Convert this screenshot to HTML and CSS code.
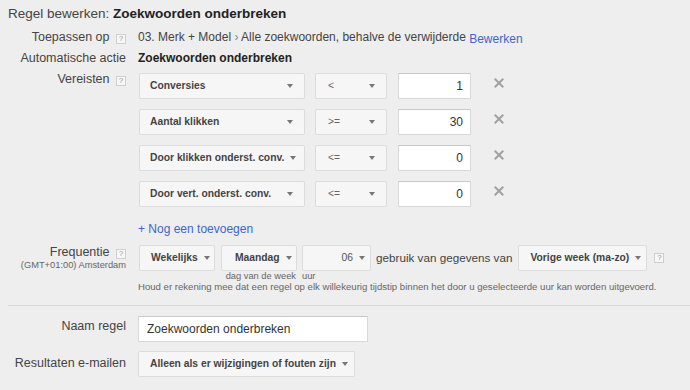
FILE: index.html
```html
<!DOCTYPE html>
<html lang="nl">
<head>
    <meta charset="UTF-8">
    <title>Regel bewerken</title>
    <link rel="stylesheet" href="styles.css">
</head>
<body>
    <div class="page">
        <h1 class="title">Regel bewerken: <b>Zoekwoorden onderbreken</b></h1>

        <div class="row row-apply">
            <div class="label">Toepassen op <span class="help">?</span></div>
            <div class="value">03. Merk + Model <span class="crumb">›</span> Alle zoekwoorden, behalve de verwijderde <a class="link edit" href="#">Bewerken</a></div>
        </div>

        <div class="row row-action">
            <div class="label">Automatische actie</div>
            <div class="value"><b>Zoekwoorden onderbreken</b></div>
        </div>

        <div class="row row-criteria">
            <div class="label label-top">Vereisten <span class="help">?</span></div>
            <div class="value">
                <div class="criteria">
                    <div class="criterion">
                        <div class="select metric">Conversies<span class="arrow"></span></div>
                        <div class="select op">&lt;<span class="arrow"></span></div>
                        <div class="input num">1</div>
                        <span class="remove"></span>
                    </div>
                    <div class="criterion">
                        <div class="select metric">Aantal klikken<span class="arrow"></span></div>
                        <div class="select op">&gt;=<span class="arrow"></span></div>
                        <div class="input num">30</div>
                        <span class="remove"></span>
                    </div>
                    <div class="criterion">
                        <div class="select metric">Door klikken onderst. conv.<span class="arrow"></span></div>
                        <div class="select op">&lt;=<span class="arrow"></span></div>
                        <div class="input num">0</div>
                        <span class="remove"></span>
                    </div>
                    <div class="criterion">
                        <div class="select metric">Door vert. onderst. conv.<span class="arrow"></span></div>
                        <div class="select op">&lt;=<span class="arrow"></span></div>
                        <div class="input num">0</div>
                        <span class="remove"></span>
                    </div>
                </div>
                <a class="link add" href="#">+ Nog een toevoegen</a>
            </div>
        </div>

        <div class="row row-freq">
            <div class="label label-top">
                <div>Frequentie <span class="help">?</span></div>
                <div class="tz">(GMT+01:00) Amsterdam</div>
            </div>
            <div class="value">
                <div class="freq">
                    <div class="field">
                        <div class="select auto week">Wekelijks<span class="arrow"></span></div>
                    </div>
                    <div class="field">
                        <div class="select auto day">Maandag<span class="arrow"></span></div>
                        <div class="sub sub-right">dag van de week</div>
                    </div>
                    <div class="field">
                        <div class="select hour">06<span class="arrow"></span></div>
                        <div class="sub">uur</div>
                    </div>
                    <div class="freq-text">gebruik van gegevens van</div>
                    <div class="field">
                        <div class="select auto range">Vorige week (ma-zo)<span class="arrow"></span></div>
                    </div>
                    <span class="help help-range">?</span>
                </div>
                <div class="note">Houd er rekening mee dat een regel op elk willekeurig tijdstip binnen het door u geselecteerde uur kan worden uitgevoerd.</div>
            </div>
        </div>

        <hr class="divider">

        <div class="row row-name">
            <div class="label label-top">Naam regel</div>
            <div class="value"><div class="input name">Zoekwoorden onderbreken</div></div>
        </div>

        <div class="row row-mail">
            <div class="label label-top">Resultaten e-mailen</div>
            <div class="value"><div class="select auto mail">Alleen als er wijzigingen of fouten zijn<span class="arrow"></span></div></div>
        </div>
    </div>
</body>
</html>
```

FILE: styles.css
```css
html, body {
    margin: 0;
    padding: 0;
    background-color: #eeeeee;
}
body {
    font-family: "Liberation Sans", Arial, sans-serif;
    color: #444;
    font-size: 12px;
    overflow: hidden;
}
.page {
    width: 690px;
    padding-top: 5px;
}
.title {
    margin: 0 0 6px 8px;
    font-size: 13.5px;
    line-height: 18px;
    font-weight: normal;
    color: #444;
}
.title b {
    color: #222;
}
.row {
    display: flex;
    align-items: flex-start;
}
.label {
    width: 126px;
    flex: none;
    text-align: right;
    font-size: 12.5px;
    line-height: 16px;
    color: #444;
}
.label-top {
    line-height: 13px;
}
.value {
    margin-left: 12px;
    font-size: 12px;
    line-height: 16px;
    color: #444;
}
.value b {
    color: #222;
}
.help {
    display: inline-block;
    box-sizing: border-box;
    width: 10px;
    height: 10px;
    margin-left: 3px;
    border: 1px solid #cfcfcf;
    background-color: #f7f7f7;
    color: #999;
    font-size: 8px;
    line-height: 8px;
    text-align: center;
    vertical-align: 0;
}
.crumb {
    color: #888;
}
.link {
    color: #3a68c4;
    text-decoration: none;
}
.edit {
    font-size: 12px;
    position: relative;
    top: 2px;
}
.row-action {
    margin-top: 5px;
}
.row-criteria {
    margin-top: 7px;
}
.criteria {
    display: flex;
    flex-direction: column;
    gap: 10px;
}
.criterion {
    display: flex;
    align-items: center;
    margin-left: 1px;
}
.select {
    box-sizing: border-box;
    height: 26px;
    display: flex;
    align-items: center;
    justify-content: space-between;
    padding: 0 11px 0 10px;
    background-color: #f6f6f6;
    border: 1px solid #dcdcdc;
    border-radius: 2px;
    font-size: 10.3px;
    font-weight: bold;
    color: #444;
    white-space: nowrap;
}
.arrow {
    width: 0;
    height: 0;
    margin-left: 6px;
    border-top: 4px solid #777;
    border-left: 3px solid transparent;
    border-right: 3px solid transparent;
}
.metric {
    width: 166px;
}
.op {
    width: 72px;
    margin-left: 10px;
    font-weight: normal;
    color: #666;
    padding-left: 12px;
}
.input {
    box-sizing: border-box;
    height: 26px;
    background-color: #fff;
    border: 1px solid #d9d9d9;
    border-top-color: #c8c8c8;
    font-size: 12px;
    line-height: 24px;
    color: #333;
}
.num {
    width: 73px;
    margin-left: 11px;
    text-align: right;
    padding-right: 7px;
}
.remove {
    position: relative;
    width: 10px;
    height: 10px;
    margin-left: 23px;
    margin-top: -6px;
}
.remove::before,
.remove::after {
    content: "";
    position: absolute;
    left: -1px;
    top: 4px;
    width: 12px;
    height: 2px;
    background-color: #a0a0a0;
    transform: rotate(45deg);
}
.remove::after {
    transform: rotate(-45deg);
}
.add {
    display: block;
    margin-top: 14px;
    font-size: 12px;
}
.row-freq {
    margin-top: 8px;
}
.row-freq .label {
    line-height: 14px;
}
.tz {
    font-size: 9.3px;
    line-height: 12px;
    color: #666;
}
.freq {
    display: flex;
    align-items: flex-start;
    margin-left: 1px;
}
.field {
    display: flex;
    flex-direction: column;
}
.auto {
    padding: 0 11px 0 11px;
}
.week {
    width: 76px;
}
.day {
    width: 76px;
    margin-left: 6px;
    padding-left: 13px;
}
.hour {
    width: 69px;
    margin-left: 5px;
    justify-content: flex-end;
    font-weight: normal;
    color: #555;
    padding-right: 5px;
}
.sub {
    font-size: 9.3px;
    line-height: 10px;
    height: 10px;
    color: #666;
    margin-left: 5px;
}
.sub-right {
    text-align: right;
    margin-left: 0;
    margin-right: 1px;
}
.freq-text {
    margin-left: 5px;
    line-height: 26px;
    font-size: 11.7px;
    color: #444;
}
.range {
    width: 129px;
    margin-left: 6px;
}
.help-range {
    margin-left: 7px;
    margin-top: 8px;
}
.note {
    margin-top: 1px;
    font-size: 9.6px;
    line-height: 10px;
    color: #666;
    white-space: nowrap;
}
.divider {
    margin: 13px 0 0 8px;
    border: none;
    border-top: 1px solid #d6d6d6;
    height: 0;
}
.row-name {
    margin-top: 10px;
}
.row-name .label {
    margin-top: 4px;
}
.name {
    width: 230px;
    padding-left: 8px;
    line-height: 24px;
}
.row-mail {
    margin-top: 9px;
}
.row-mail .label {
    margin-top: 6px;
}
.mail {
    width: 217px;
}
```
